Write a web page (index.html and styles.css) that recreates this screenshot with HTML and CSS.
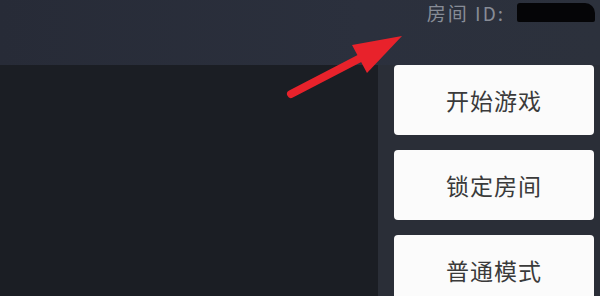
FILE: index.html
```html
<!DOCTYPE html>
<html>
<head>
  <title>房间</title>
  <link rel="stylesheet" href="styles.css">
</head>
<body>
  <div class="screen">
    <div class="top-bar">
      <span class="room-label">房间 ID:</span>
      <span class="room-id"></span>
    </div>
    <div class="main">
      <div class="stage"></div>
      <div class="side">
        <button class="side-btn">开始游戏</button>
        <button class="side-btn">锁定房间</button>
        <button class="side-btn">普通模式</button>
      </div>
    </div>

    <!-- annotation arrow -->
    <svg class="arrow" width="600" height="296" viewBox="0 0 600 296">
      <line x1="291" y1="94" x2="372" y2="52" stroke="#e8222b" stroke-width="8" stroke-linecap="round"/>
      <polygon points="402,36 352,45 367,73" fill="#e8222b"/>
    </svg>
  </div>
</body>
</html>
```

FILE: styles.css
```css
body {
  margin: 0;
  font-family: "Noto Sans CJK SC", "Liberation Sans", sans-serif;
  background-color: #1b1e23;
}

.screen {
  position: relative;
  width: 600px;
  height: 296px;
  overflow: hidden;
  display: flex;
  flex-direction: column;
}

.top-bar {
  height: 65px;
  flex-shrink: 0;
  background: linear-gradient(90deg, #272b37, #2b303d 60%, #2c313c);
  display: flex;
  justify-content: flex-end;
  align-items: flex-start;
  padding-right: 5px;
  box-sizing: border-box;
}

.room-label {
  color: #878c96;
  font-size: 19px;
  line-height: 26px;
  margin-right: 12px;
  letter-spacing: 2px;
}

.room-id {
  width: 78px;
  height: 19px;
  margin-top: 3px;
  background-color: #050507;
  border-radius: 3px 10px 2px 2px;
}

.main {
  flex: 1;
  min-height: 0;
  display: flex;
}

.stage {
  width: 378px;
  background-color: #1b1e24;
}

.side {
  flex: 1;
  background-color: #2a2e37;
  display: flex;
  flex-direction: column;
  gap: 15px;
  padding: 0 6px 0 16px;
}

.side-btn {
  height: 70px;
  flex-shrink: 0;
  border: none;
  border-radius: 4px;
  background-color: #fbfbfb;
  color: #3a3a3a;
  font-family: "Noto Sans CJK SC", sans-serif;
  font-size: 23px;
  letter-spacing: 1px;
}

.arrow {
  position: absolute;
  left: 0;
  top: 0;
  pointer-events: none;
}
```
